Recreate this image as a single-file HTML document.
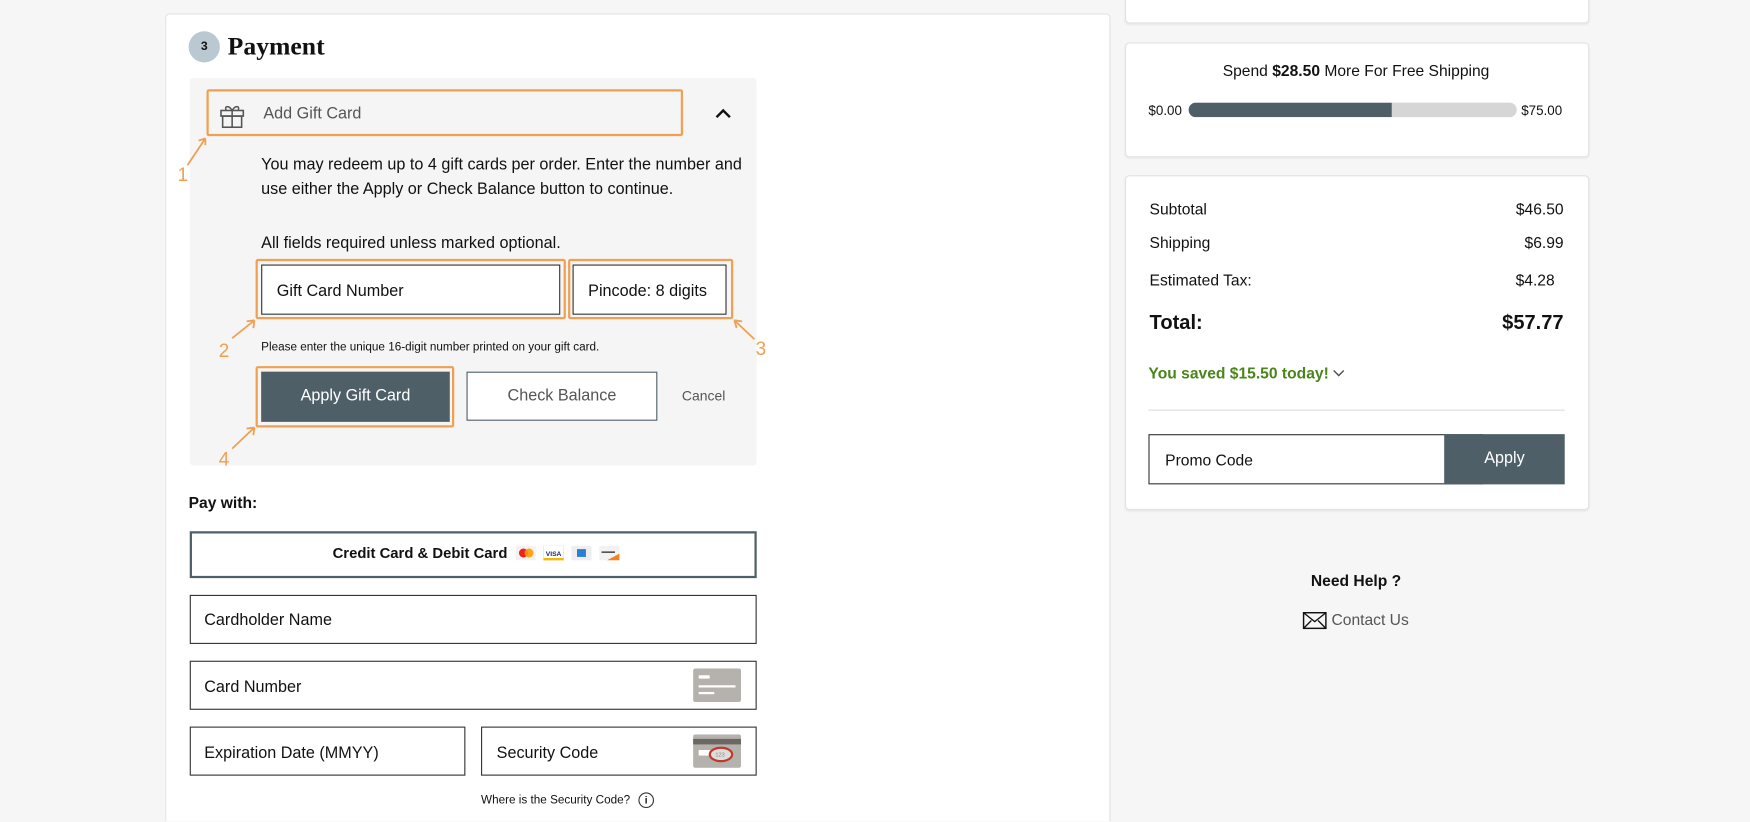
<!DOCTYPE html>
<html><head><meta charset="utf-8"><style>
html,body{margin:0;padding:0;width:1750px;height:822px;overflow:hidden;background:#f6f6f6;}
#s{position:absolute;left:0;top:0;width:1568px;height:736px;overflow:hidden;transform:scale(1.11607);transform-origin:0 0;font-family:"Liberation Sans",sans-serif;color:#111;}
.a{position:absolute;}
.t{position:absolute;white-space:nowrap;height:20px;line-height:20px;}
.card{position:absolute;background:#fff;border:1px solid #e2e2e2;border-radius:4px;box-shadow:0 1px 2px rgba(0,0,0,.06);}
.or{position:absolute;border:2px solid #f0a050;border-radius:2px;}
.fld{position:absolute;background:#fff;border:1px solid #333;box-sizing:border-box;}
.on{position:absolute;color:#f0a050;font-size:17px;}
</style></head><body><div id="s">
<div class="card" style="left:148px;top:12px;width:845px;height:724px;border-bottom:none;border-radius:4px 4px 0 0;box-shadow:none;"></div>
<div class="a" style="left:169px;top:28px;width:28px;height:28px;border-radius:50%;background:#b9c8d1;font-size:11px;font-weight:bold;text-align:center;line-height:28px;">3</div>
<div class="t" style="left:204px;top:31px;font-family:'Liberation Serif',serif;font-weight:bold;font-size:23px;line-height:22px;">Payment</div>
<div class="a" style="left:170px;top:70px;width:508px;height:347px;background:#f5f5f5;border-radius:3px;"></div>
<div class="or" style="left:185px;top:80px;width:423px;height:38px;"></div>
<svg class="a" style="left:196px;top:92px" width="24" height="24" viewBox="0 0 24 24" fill="none" stroke="#555" stroke-width="1.4"><rect x="2" y="7" width="20" height="5"/><rect x="3.5" y="12" width="17" height="10"/><line x1="12" y1="7" x2="12" y2="22"/><path d="M12 7C9 2 5 3 6.5 6.5M12 7c3-5 7-4 5.5-0.5"/></svg>
<div class="t" style="left:236px;top:92px;font-size:14.5px;color:#555;">Add Gift Card</div>
<svg class="a" style="left:640px;top:96px" width="16" height="12" viewBox="0 0 16 12"><path d="M2 9L8 3L14 9" fill="none" stroke="#111" stroke-width="2.2"/></svg>
<div class="a" style="left:234px;top:137px;font-size:14.5px;line-height:22px;width:440px;">You may redeem up to 4 gift cards per order. Enter the number and use either the Apply or Check Balance button to continue.</div>
<div class="t" style="left:234px;top:208px;font-size:14.5px;">All fields required unless marked optional.</div>
<div class="or" style="left:229px;top:232px;width:274px;height:50px;"></div>
<div class="fld" style="left:234px;top:237px;width:268px;height:45px;"></div>
<div class="t" style="left:248px;top:251px;font-size:14.5px;">Gift Card Number</div>
<div class="or" style="left:509px;top:232px;width:144px;height:50px;"></div>
<div class="fld" style="left:513px;top:237px;width:138px;height:45px;"></div>
<div class="t" style="left:527px;top:251px;font-size:14.5px;">Pincode: 8 digits</div>
<div class="t" style="left:234px;top:301px;font-size:10.5px;">Please enter the unique 16-digit number printed on your gift card.</div>
<div class="or" style="left:229px;top:328px;width:174px;height:51px;"></div>
<div class="a" style="left:234px;top:333px;width:169px;height:45px;background:#4f5f68;color:#fff;font-size:14.5px;text-align:center;line-height:45px;">Apply Gift Card</div>
<div class="a" style="left:418px;top:333px;width:169px;height:42px;border:1px solid #4f5f68;background:#fff;color:#555;font-size:14.5px;text-align:center;line-height:42px;">Check Balance</div>
<div class="t" style="left:611px;top:345px;font-size:12.5px;color:#555;">Cancel</div>
<svg class="a" style="left:150px;top:110px" width="560" height="320" viewBox="150 110 560 320" fill="none" stroke="#f0a050" stroke-width="1.6">
<path d="M168 148L184 124M184 124l-6 2M184 124l0 6"/>
<path d="M208 303L228 287M228 287l-7 1M228 287l-1 7"/>
<path d="M676 304L658 287M658 287l2 7M658 287l7 1"/>
<path d="M208 402L228 383M228 383l-7 1M228 383l-1 7"/>
</svg>
<div class="on" style="left:159px;top:147px;">1</div>
<div class="on" style="left:196px;top:305px;">2</div>
<div class="on" style="left:677px;top:303px;">3</div>
<div class="on" style="left:196px;top:402px;">4</div>
<div class="t" style="left:169px;top:440px;font-size:14px;font-weight:bold;">Pay with:</div>
<div class="a" style="left:170px;top:476px;width:504px;height:38px;border:2px solid #4f5f68;background:#fff;"></div>
<div class="t" style="left:298px;top:486px;font-size:13.3px;font-weight:bold;">Credit Card &amp; Debit Card</div>
<svg class="a" style="left:462px;top:489px" width="95" height="14" viewBox="0 0 95 14"><rect x="0" y="0" width="18" height="13" fill="#f2f2f2"/><circle cx="7" cy="6.5" r="4" fill="#e22"/><circle cx="12" cy="6.5" r="4" fill="#f90" opacity=".9"/><rect x="25" y="0" width="18" height="13" fill="#fff" stroke="#ddd" stroke-width=".5"/><text x="27" y="9" font-size="6" font-weight="bold" fill="#1a1f71" font-family="Liberation Sans">VISA</text><rect x="25" y="11" width="18" height="2" fill="#f7b600"/><rect x="50" y="0" width="18" height="13" fill="#eee"/><rect x="55" y="3" width="8" height="7" fill="#2a7ed3"/><rect x="75" y="0" width="18" height="13" fill="#f2f2f2"/><path d="M82 13L93 7V13Z" fill="#f58220"/><rect x="77" y="5" width="12" height="1.5" fill="#555"/></svg>
<div class="fld" style="left:170px;top:533px;width:508px;height:44px;"></div>
<div class="t" style="left:183px;top:546px;font-size:14.5px;">Cardholder Name</div>
<div class="fld" style="left:170px;top:592px;width:508px;height:44px;"></div>
<div class="t" style="left:183px;top:606px;font-size:14.5px;">Card Number</div>
<svg class="a" style="left:621px;top:599px" width="43" height="30" viewBox="0 0 43 30"><rect width="43" height="30" rx="2" fill="#b5b2ad"/><rect x="5" y="6" width="10" height="3" rx="1" fill="#fff"/><rect x="5" y="15" width="33" height="2" fill="#fff"/><rect x="5" y="21" width="14" height="2" fill="#fff"/></svg>
<div class="fld" style="left:170px;top:651px;width:247px;height:44px;"></div>
<div class="t" style="left:183px;top:665px;font-size:14.5px;">Expiration Date (MMYY)</div>
<div class="fld" style="left:431px;top:651px;width:247px;height:44px;"></div>
<div class="t" style="left:445px;top:665px;font-size:14.5px;">Security Code</div>
<svg class="a" style="left:621px;top:658px" width="43" height="30" viewBox="0 0 43 30"><rect width="43" height="30" rx="2" fill="#b5b2ad"/><rect y="4" width="43" height="5" fill="#6b6762"/><rect x="5" y="14" width="14" height="5" fill="#fff"/><ellipse cx="25" cy="18" rx="10" ry="6" fill="#ddd" stroke="#c0392b" stroke-width="2"/><text x="20" y="20" font-size="5" fill="#888" font-family="Liberation Sans">123</text></svg>
<div class="t" style="left:431px;top:707px;font-size:10.5px;">Where is the Security Code?</div>
<div class="a" style="left:572px;top:710px;width:12px;height:12px;border:1.3px solid #333;border-radius:50%;font-size:9px;text-align:center;line-height:12px;font-weight:bold;">i</div>
<div class="card" style="left:1008px;top:-10px;width:414px;height:29px;"></div>
<div class="card" style="left:1008px;top:38px;width:414px;height:101px;"></div>
<div class="t" style="left:1008px;top:53px;width:414px;text-align:center;font-size:14px;">Spend <b>$28.50</b> More For Free Shipping</div>
<div class="t" style="left:1029px;top:89px;font-size:12px;">$0.00</div>
<div class="a" style="left:1065px;top:92px;width:294px;height:13px;border-radius:7px;background:#d6d6d6;overflow:hidden;"><div style="width:182px;height:13px;background:#4f5f68;"></div></div>
<div class="t" style="left:1363px;top:89px;font-size:12px;">$75.00</div>
<div class="card" style="left:1008px;top:157px;width:414px;height:298px;"></div>
<div class="t" style="left:1030px;top:177px;font-size:14px;">Subtotal</div><div class="t" style="left:1300px;width:101px;text-align:right;top:177px;font-size:14px;">$46.50</div>
<div class="t" style="left:1030px;top:207px;font-size:14px;">Shipping</div><div class="t" style="left:1300px;width:101px;text-align:right;top:207px;font-size:14px;">$6.99</div>
<div class="t" style="left:1030px;top:241px;font-size:14px;">Estimated Tax:</div><div class="t" style="left:1300px;width:93px;text-align:right;top:241px;font-size:14px;">$4.28</div>
<div class="t" style="left:1030px;top:279px;font-size:18px;font-weight:bold;">Total:</div><div class="t" style="left:1300px;width:101px;text-align:right;top:279px;font-size:18px;font-weight:bold;">$57.77</div>
<div class="t" style="left:1029px;top:324px;font-size:14px;font-weight:bold;color:#4a851a;">You saved $15.50 today!</div>
<svg class="a" style="left:1193px;top:330px" width="13" height="9" viewBox="0 0 13 9"><path d="M2 2l4.5 4.5L11 2" fill="none" stroke="#555" stroke-width="1.3"/></svg>
<div class="a" style="left:1029px;top:367px;width:373px;height:1px;background:#ddd;"></div>
<div class="fld" style="left:1029px;top:389px;width:300px;height:45px;"></div>
<div class="t" style="left:1044px;top:402px;font-size:14px;">Promo Code</div>
<div class="a" style="left:1294px;top:389px;width:108px;height:45px;background:#4f5f68;color:#fff;font-size:14.5px;text-align:center;line-height:45px;">Apply</div>
<div class="t" style="left:1008px;top:510px;width:414px;text-align:center;font-size:14px;font-weight:bold;">Need Help ?</div>
<svg class="a" style="left:1167px;top:548px" width="22" height="16" viewBox="0 0 22 16"><rect x="1" y="1" width="20" height="14" fill="none" stroke="#111" stroke-width="1.3"/><path d="M1 1l10 8 10-8M1 15l7-7M21 15l-7-7" fill="none" stroke="#111" stroke-width="1.2"/></svg>
<div class="t" style="left:1193px;top:545px;font-size:14px;color:#555;">Contact Us</div>
</div></body></html>
